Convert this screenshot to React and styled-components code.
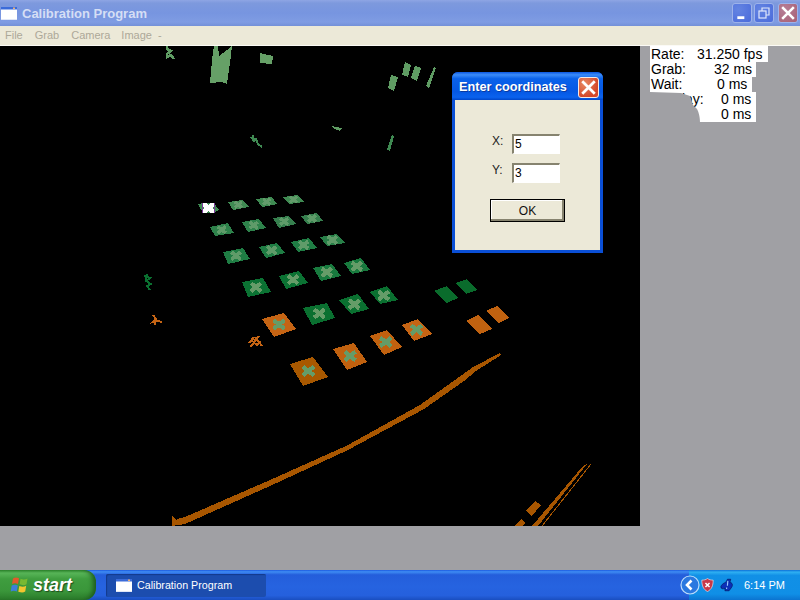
import React from "react";
import styled, { createGlobalStyle } from "styled-components";

const Global = createGlobalStyle`
  html, body { margin: 0; padding: 0; background: #a0a0a4; }
  * { box-sizing: border-box; }
`;

const Page = styled.div`
  position: relative;
  width: 800px;
  height: 600px;
  overflow: hidden;
  display: flex;
  flex-direction: column;
  font-family: "Liberation Sans", Arial, sans-serif;
`;

const TitleBar = styled.div`
  height: 26px;
  flex: none;
  display: flex;
  align-items: center;
  padding: 0 2px 0 1px;
  background: linear-gradient(180deg, #8ea5e4 0%, #7d99dd 12%, #7795e0 50%, #7f9ce3 85%, #7390d8 100%);
`;

const TitleText = styled.span`
  margin-left: 5px;
  font-size: 13px;
  font-weight: 700;
  color: #d5def5;
  flex: 1;
`;

const WinButton = styled.div`
  width: 20px;
  height: 20px;
  margin-left: ${(p) => p.$gap}px;
  border: 1px solid #9db2ea;
  border-radius: 3px;
  background: ${(p) => (p.$close ? "radial-gradient(circle at 30% 30%, #b77f97, #a75f74)" : "radial-gradient(circle at 30% 30%, #6484e2, #4a6bdb)")};
  display: flex;
  align-items: center;
  justify-content: center;
`;

const MenuBar = styled.div`
  height: 20px;
  flex: none;
  display: flex;
  align-items: center;
  padding: 0 0 1px 5px;
  background: #ece9d8;
  border-bottom: 1px solid #fbfaf5;
`;

const MenuItem = styled.span`
  font-size: 11px;
  color: #aca899;
  margin-right: ${(p) => p.$gap}px;
`;

const Main = styled.div`
  flex: 1;
  display: flex;
  align-items: flex-start;
  background: #a0a0a4;
`;

const Canvas = styled.svg`
  display: block;
  flex: none;
  width: 640px;
  height: 480px;
  background: #000;
`;

const Stats = styled.div`
  position: relative;
  margin-left: 10px;
  display: flex;
  flex-direction: column;
  align-items: flex-start;
`;

const StatLine = styled.div`
  width: ${(p) => p.$w}px;
  height: ${(p) => p.$h}px;
  background: #fff;
  display: flex;
  align-items: center;
  font-size: 14px;
  line-height: 15px;
  color: #000;
  padding-left: 1px;
  white-space: pre;
`;

const StatLabel = styled.span`
  flex: none;
  width: ${(p) => p.$vx}px;
  padding-left: ${(p) => p.$indent || 0}px;
`;

const Notch = styled.svg`
  position: absolute;
  left: 0;
  top: 46px;
  width: 52px;
  height: 32px;
`;

const Dialog = styled.div`
  position: absolute;
  left: 452px;
  top: 72px;
  width: 151px;
  height: 181px;
  display: flex;
  flex-direction: column;
  border-radius: 6px 6px 0 0;
  background: #0a4fd6;
`;

const DialogTitle = styled.div`
  height: 28px;
  flex: none;
  display: flex;
  align-items: center;
  justify-content: space-between;
  padding: 2px 4px 0 7px;
  border-radius: 6px 6px 0 0;
  background: linear-gradient(180deg, #0a56e0 0%, #3c8cf8 10%, #0a62ea 24%, #0558e4 70%, #0a62ee 90%, #0046c8 100%);
  color: #fff;
  font-size: 12.7px;
  font-weight: 700;
  text-shadow: 1px 1px 0 #0a3aa0;
`;

const CloseRed = styled.div`
  width: 21px;
  height: 21px;
  border: 1px solid #f4e8e4;
  border-radius: 3px;
  background: radial-gradient(circle at 30% 30%, #e88a64, #d4482a 70%);
  display: flex;
  align-items: center;
  justify-content: center;
`;

const DialogBody = styled.div`
  flex: 1;
  margin: 0 3px 3px;
  background: #ece9d8;
  display: flex;
  flex-direction: column;
  padding-top: 34px;
`;

const FieldRow = styled.div`
  display: flex;
  align-items: flex-start;
  height: 20px;
  margin-bottom: 9px;
  padding-left: 37px;
`;

const FieldLabel = styled.span`
  width: 20px;
  font-size: 12px;
  line-height: 14px;
  color: #222;
`;

const Field = styled.div`
  width: 48px;
  height: 20px;
  background: #fff;
  border-style: solid;
  border-width: 2px 1px 1px 2px;
  border-color: #86836f #fff #fff #86836f;
  font-size: 12px;
  line-height: 16px;
  padding-left: 1px;
  color: #000;
`;

const OkButton = styled.div`
  margin: 7px 0 0 35px;
  width: 75px;
  height: 23px;
  border: 1px solid #000;
  background: #ece9d8;
  box-shadow: inset -2px -2px 0 #86836f, inset 1px 1px 0 #fff;
  display: flex;
  align-items: center;
  justify-content: center;
  font-size: 12px;
  color: #111;
`;

const Taskbar = styled.div`
  height: 30px;
  flex: none;
  display: flex;
  align-items: center;
  background: linear-gradient(180deg, #1c5ae0 0%, #3f8cf3 6%, #245edb 16%, #2663e0 55%, #2560dd 85%, #1a4ec0 100%);
`;

const StartButton = styled.div`
  width: 96px;
  height: 30px;
  flex: none;
  display: flex;
  align-items: center;
  padding: 0 0 0 10px;
  gap: 4px;
  border-radius: 0 12px 12px 0;
  background: linear-gradient(180deg, #2f8a2f 0%, #58b558 10%, #3f9d3f 30%, #3a963a 70%, #2a7a2a 100%);
  box-shadow: inset -5px 0 5px -2px #1d5a1d;
  color: #fff;
  font-size: 18px;
  font-weight: 700;
  font-style: italic;
  text-shadow: 1px 1px 1px #1c4c1c;
`;

const TaskButton = styled.div`
  width: 160px;
  height: 23px;
  margin-left: 10px;
  flex: none;
  display: flex;
  align-items: center;
  gap: 5px;
  padding-left: 10px;
  border-radius: 2px;
  background: #1c4dae;
  box-shadow: inset 1px 1px 1px #133a8c;
  color: #fff;
  font-size: 10.7px;
`;

const Spacer = styled.div`
  flex: 1;
`;

const Tray = styled.div`
  width: 111px;
  height: 30px;
  flex: none;
  display: flex;
  align-items: center;
  background: linear-gradient(180deg, #0d6fd8 0%, #2fb0f2 7%, #1190e6 18%, #108fe6 80%, #0b74d0 100%);
  color: #fff;
  font-size: 11px;
`;

const Chevron = styled.svg`
  margin-left: -9px;
  flex: none;
`;

const TrayIcon = styled.svg`
  margin-left: ${(p) => p.$gap}px;
  flex: none;
`;

const Clock = styled.span`
  margin-left: 10px;
  white-space: nowrap;
`;

const SQUARES = [
  ["#3f8a52", "#639b6b", 3, 3.6, [[228, 202], [243, 200], [249, 207], [233, 210]]],
  ["#3f8a52", "#639b6b", 3, 3.6, [[256, 199], [272, 197], [277, 204], [262, 207]]],
  ["#3f8a52", "#639b6b", 3, 3.6, [[283, 197], [297, 195], [304, 202], [289, 204]]],
  ["#2e824b", "#5f9b69", 3.4, 4, [[210, 227], [228, 223], [234, 233], [215, 236]]],
  ["#2e824b", "#5f9b69", 3.4, 4, [[242, 222], [259, 219], [266, 228], [248, 232]]],
  ["#367f4e", "#5f9b69", 3.4, 4, [[273, 218], [289, 216], [296, 224], [279, 228]]],
  ["#367f4e", "#5f9b69", 3.4, 4, [[301, 216], [317, 213], [323, 221], [307, 224]]],
  ["#1f7d44", "#5f9b69", 3.8, 4.6, [[223, 252], [243, 248], [250, 259], [228, 264]]],
  ["#1f7d44", "#5f9b69", 3.8, 4.6, [[259, 247], [277, 243], [285, 253], [266, 258]]],
  ["#1f7d44", "#5f9b69", 3.8, 4.6, [[291, 242], [309, 238], [317, 248], [298, 252]]],
  ["#287f48", "#5f9b69", 3.8, 4.6, [[320, 237], [337, 234], [345, 243], [327, 246]]],
  ["#0b7233", "#659c68", 4, 5, [[242, 282], [263, 278], [271, 292], [248, 297]]],
  ["#0b7233", "#659c68", 4, 5, [[279, 276], [299, 271], [308, 283], [286, 289]]],
  ["#187a3e", "#659c68", 4, 5, [[313, 268], [332, 264], [341, 276], [321, 281]]],
  ["#187a3e", "#659c68", 4, 5, [[344, 263], [361, 258], [370, 270], [352, 274]]],
  ["#0a7030", "#659c68", 4.2, 5.2, [[303, 308], [327, 303], [335, 318], [312, 325]]],
  ["#0a7030", "#659c68", 4.2, 5.2, [[339, 300], [358, 294], [369, 309], [351, 314]]],
  ["#0a7030", "#659c68", 4.2, 5.2, [[370, 292], [387, 286], [398, 300], [380, 304]]],
  ["#c56414", "#659c68", 4.2, 5.4, [[262, 319], [284, 313], [296, 329], [274, 337]]],
  ["#a85800", "#659c68", 4.2, 5.4, [[290, 364], [313, 357], [328, 377], [303, 386]]],
  ["#c0610f", "#659c68", 4.2, 5.4, [[333, 349], [354, 343], [367, 362], [347, 370]]],
  ["#c0610f", "#659c68", 4.2, 5.4, [[370, 336], [387, 330], [402, 347], [384, 355]]],
  ["#c56414", "#659c68", 4.2, 5.4, [[402, 325], [418, 319], [432, 334], [414, 341]]],
];

const BLOBS = [
  ["#3f8a52", [[198, 204], [203, 203], [214, 203], [219, 210], [214, 213], [203, 213]]],
  ["#0a6c2c", [[434, 291], [447, 286], [458, 298], [447, 303]]],
  ["#0a6c2c", [[455, 283], [467, 279], [477, 290], [466, 294]]],
  ["#c06210", [[466, 321], [478, 315], [492, 329], [480, 334]]],
  ["#c06210", [[486, 311], [497, 306], [509, 318], [499, 323]]],
  ["#66a067", [[214, 46], [218, 46], [219, 56], [227, 50], [232, 46], [231, 55], [227, 84], [222, 82], [210, 83], [212, 60]]],
  ["#66a067", [[260, 53], [273, 56], [272, 64], [260, 63]]],
  ["#5f9c63", [[405, 62], [411, 65], [408, 77], [402, 75]]],
  ["#5f9c63", [[415, 66], [421, 68], [417, 81], [411, 78]]],
  ["#5f9c63", [[391, 75], [398, 77], [394, 91], [388, 88]]],
  ["#5f9c63", [[434, 67], [436, 68], [429, 88], [426, 86]]],
  ["#5f9c63", [[331, 126], [342, 128], [340, 131], [333, 128]]],
  ["#3f8a52", [[392, 135], [394, 136], [390, 151], [387, 150]]],
  ["#a85600", [[185, 517], [270, 480], [347, 445.5], [420, 405], [462, 375], [473, 367], [500, 353], [501, 355], [476, 371], [464, 381], [424, 409], [348, 450], [270, 486], [185, 524], [172, 526], [172, 516], [176, 520], [180, 518]]],
  ["#a85600", [[515, 526], [521, 519], [525, 523], [523, 526]]],
  ["#a85600", [[526, 511], [535, 501], [541, 505], [532, 516]]],
  ["#a85600", [[532, 526], [583, 466], [587, 464], [538, 526]]],
];

const SCRIBBLES = [
  ["#5f9c63", "M167 46 L167 49 L171 51 L167 54 L167 57 L171 55 L174 59", 2.6],
  ["#3f8a52", "M251 137 L254 141 L256 139 L258 144 L262 147 M253 135 L254 141", 2],
  ["#0a7030", "M144 276 L150 278 L146 281 L151 284 L147 286 L150 290 M147 274 L146 281", 2],
  ["#c56414", "M153 315 L156 319 L153 322 L158 321 L162 322 M156 319 L155 325", 2],
  ["#c56414", "M249 343 L253 338 L255 341 L259 336 M251 340 L257 345 L261 342 M255 337 L262 346 M250 347 L254 343", 1.8],
];

const pts = (p) => p.map((q) => q.join(",")).join(" ");
const centre = (p) => [p.reduce((a, q) => a + q[0], 0) / p.length, p.reduce((a, q) => a + q[1], 0) / p.length];

const WindowIcon = () => (
  <svg width="16" height="13" viewBox="0 0 16 13">
    <rect x="0" y="0" width="16" height="13" fill="#fff" />
    <rect x="0" y="0" width="16" height="2.5" fill="#3b6bd9" />
    <rect x="12" y="0.5" width="2" height="1.5" fill="#f0b070" />
    <rect x="0" y="12" width="16" height="1" fill="#dfe6f7" />
  </svg>
);

const Flag = () => (
  <svg width="19" height="18" viewBox="0 0 19 18">
    <path d="M3 2.5 C5 1 7 1.2 9 2.2 L8 8 C6 7 4 7 2 8 Z" fill="#e2592b" />
    <path d="M10.5 2.8 C12.5 3.8 15 4 17.5 2.6 L16.5 8.3 C14.5 9.5 12 9.3 9.6 8.3 Z" fill="#78b932" />
    <path d="M1.7 9.5 C4 8.5 6 8.5 7.8 9.5 L6.8 15.5 C5 14.4 2.8 14.4 0.7 15.5 Z" fill="#3d7fd8" />
    <path d="M9.3 10 C12 11 14 11 16.2 9.8 L15.2 15.6 C13 17 11 16.6 8.3 15.7 Z" fill="#f3c52f" />
  </svg>
);

const Mark = ({ s, w, d }) => (
  <svg width={s} height={s} viewBox="0 0 12 12">
    <path d={d} stroke="#fff" strokeWidth={w} fill="none" />
  </svg>
);

export default function App() {
  return (
    <Page>
      <Global />
      <TitleBar>
        <WindowIcon />
        <TitleText>Calibration Program</TitleText>
        <WinButton $gap={0}>
          <Mark s={14} w={2.4} d="M2 10 H8" />
        </WinButton>
        <WinButton $gap={2}>
          <svg width="14" height="14" viewBox="0 0 14 14" fill="none" stroke="#dfe7fb" strokeWidth="1.2">
            <rect x="2" y="5" width="7" height="7" />
            <path d="M5 5 V2 H12 V9 H9" />
          </svg>
        </WinButton>
        <WinButton $gap={4} $close>
          <Mark s={14} w={2.2} d="M1 1 L11 11 M11 1 L1 11" />
        </WinButton>
      </TitleBar>
      <MenuBar>
        <MenuItem $gap={12}>File</MenuItem>
        <MenuItem $gap={12}>Grab</MenuItem>
        <MenuItem $gap={11}>Camera</MenuItem>
        <MenuItem $gap={6}>Image</MenuItem>
        <MenuItem $gap={0}>-</MenuItem>
      </MenuBar>
      <Main>
        <Canvas viewBox="0 46 640 480" shapeRendering="crispEdges">
          {BLOBS.map(([c, p], i) => (
            <polygon key={i} points={pts(p)} fill={c} />
          ))}
          {SCRIBBLES.map(([c, d, w], i) => (
            <path key={i} d={d} stroke={c} strokeWidth={w} fill="none" />
          ))}
          <path d="M542 526 L591 464" stroke="#a85600" strokeWidth="1" />
          {SQUARES.map(([c, x, w, r, p], i) => {
            const [cx, cy] = centre(p);
            return (
              <g key={i}>
                <polygon points={pts(p)} fill={c} />
                <path
                  d={`M${cx - r} ${cy - r * 0.8} L${cx + r} ${cy + r * 0.8} M${cx + r} ${cy - r * 0.8} L${cx - r} ${cy + r * 0.8}`}
                  stroke={x}
                  strokeWidth={w}
                  fill="none"
                />
              </g>
            );
          })}
          <rect x="203" y="203" width="11" height="10" fill="#fff" />
          <path d="M202.5 203 V213 M214.5 203 V213" stroke="#7a3a9a" strokeWidth="1" />
          <path d="M207 203 L208.5 205 L210 203 Z M207 213 L208.5 211 L210 213 Z M203 206.5 L205 208 L203 209.5 Z M214 206.5 L212 208 L214 209.5 Z" fill="#3f8a52" />
        </Canvas>
        <Stats>
          <StatLine $w={118} $h={16}><StatLabel $vx={46}>Rate:</StatLabel>31.250 fps</StatLine>
          <StatLine $w={106} $h={15}><StatLabel $vx={63}>Grab:</StatLabel>32 ms</StatLine>
          <StatLine $w={102} $h={15}><StatLabel $vx={66}>Wait:</StatLabel>0 ms</StatLine>
          <StatLine $w={106} $h={15}><StatLabel $vx={70} $indent={13}>Delay:</StatLabel>0 ms</StatLine>
          <StatLine $w={106} $h={15}><StatLabel $vx={70} />0 ms</StatLine>
          <Notch viewBox="0 0 52 32">
            <path d="M0 0 L31 1 L40 4 L43 13 L47 17 C49 21 50 25 50 32 L0 32 Z" fill="#a0a0a4" />
          </Notch>
        </Stats>
      </Main>
      <Taskbar>
        <StartButton>
          <Flag />
          start
        </StartButton>
        <TaskButton>
          <WindowIcon />
          Calibration Program
        </TaskButton>
        <Spacer />
        <Tray>
          <Chevron width="20" height="20" viewBox="0 0 20 20">
            <circle cx="10" cy="10" r="9" fill="#2a78e0" stroke="#bcdcfa" strokeWidth="1.2" />
            <path d="M11.5 5.5 L7 10 L11.5 14.5" fill="none" stroke="#fff" strokeWidth="2.6" />
          </Chevron>
          <TrayIcon $gap={1} width="13" height="16" viewBox="0 0 16 18">
            <path d="M8 1 C10 2.5 12.5 3 15 3 C15 10 13 14.5 8 17 C3 14.5 1 10 1 3 C3.5 3 6 2.5 8 1 Z" fill="#c83848" stroke="#e8e8ee" strokeWidth="0.8" />
            <path d="M5.5 6.5 L10.5 11.5 M10.5 6.5 L5.5 11.5" stroke="#fff" strokeWidth="1.8" />
          </TrayIcon>
          <TrayIcon $gap={6} width="14" height="14" viewBox="0 0 17 16">
            <path d="M1 10 C3 5 7 6 8 3 L9 1 L13 1 L12 5 C15 5 16 8 14 11 L11 15 L6 15 L6 12 C4 13 1 13 1 10 Z" fill="#0c2fb8" stroke="#05135c" strokeWidth="0.8" />
            <path d="M9.5 3 L9 9 M8 11 L8 13" stroke="#9cc8f8" strokeWidth="1.4" />
          </TrayIcon>
          <Clock>6:14 PM</Clock>
        </Tray>
      </Taskbar>
      <Dialog>
        <DialogTitle>
          Enter coordinates
          <CloseRed>
            <Mark s={15} w={2.2} d="M1 1 L11 11 M11 1 L1 11" />
          </CloseRed>
        </DialogTitle>
        <DialogBody>
          <FieldRow>
            <FieldLabel>X:</FieldLabel>
            <Field>5</Field>
          </FieldRow>
          <FieldRow>
            <FieldLabel>Y:</FieldLabel>
            <Field>3</Field>
          </FieldRow>
          <OkButton>OK</OkButton>
        </DialogBody>
      </Dialog>
    </Page>
  );
}
